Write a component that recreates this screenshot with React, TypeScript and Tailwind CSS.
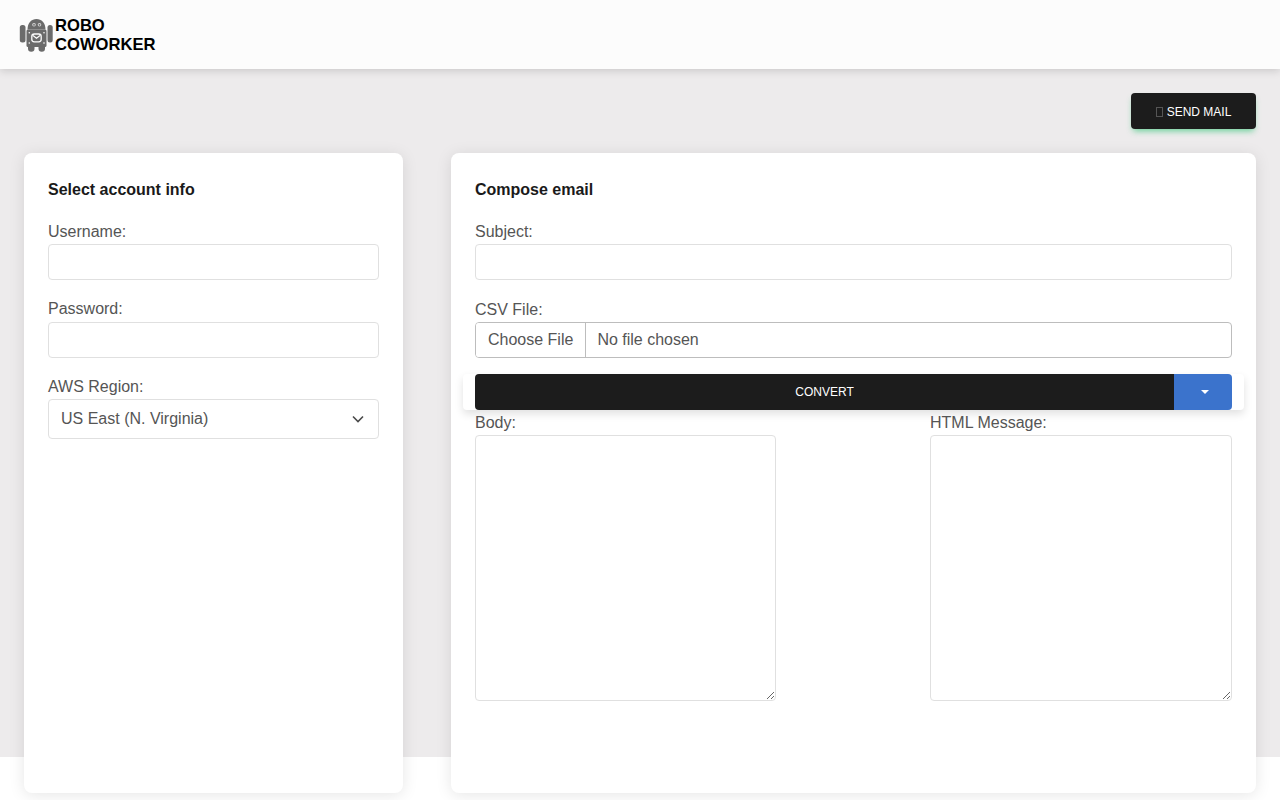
import React from 'react';

const inputClass =
  'block w-full h-9 rounded border border-[#e0e0e0] bg-white px-3 text-base text-[#555555] outline-none';

function RoboLogo() {
  return (
    <svg width="34" height="36" viewBox="0 0 34 36" className="shrink-0" fill="#6b6b6b">
      {/* head */}
      <path d="M8.500 12.500C8.500 6 12.500 2 17.500 2S26.500 6 26.500 12.500z" />
      <circle cx="15" cy="7.800" r="1.800" fill="#d8d8d8" />
      <circle cx="20.500" cy="7.800" r="1.800" fill="#d8d8d8" />
      <circle cx="15" cy="7.800" r="0.900" />
      <circle cx="20.500" cy="7.800" r="0.900" />
      {/* arms */}
      <rect x="0.800" y="8" width="5.700" height="17.500" rx="2.500" />
      <rect x="28.500" y="8" width="5.200" height="17.500" rx="2.500" />
      {/* body */}
      <rect x="7.500" y="12.500" width="20" height="17.500" rx="1.500" />
      <circle cx="10.300" cy="15.800" r="0.800" fill="#fcfcfc" />
      <circle cx="25" cy="15.800" r="0.800" fill="#fcfcfc" />
      <circle cx="10.300" cy="26" r="0.800" fill="#fcfcfc" />
      <circle cx="25" cy="26" r="0.800" fill="#fcfcfc" />
      {/* mail */}
      <rect x="12.800" y="17" width="9.400" height="7.800" rx="2.500" fill="none" stroke="#fcfcfc" strokeWidth="1.300" />
      <path d="M14 18.500L17.500 21.200l3.500-2.700" fill="none" stroke="#fcfcfc" strokeWidth="1.100" />
      {/* legs */}
      <path d="M9 29.500h6.500v2a3.250 3.250 0 0 1-6.500 0z" />
      <path d="M19.500 29.500h6.500v2a3.250 3.250 0 0 1-6.500 0z" />
    </svg>
  );
}

function Field({ label, raised, children }: { label: string; raised?: boolean; children: React.ReactNode }) {
  return (
    <div>
      <label className={raised ? 'block text-base leading-6 mb-[1px] text-[#555555]' : 'block text-base leading-6 pt-[1px] text-[#555555]'}>
        {label}
      </label>
      {children}
    </div>
  );
}

export default function App() {
  return (
    <div className="font-['Liberation_Sans',Arial,sans-serif] text-[#212529] bg-white h-[800px] overflow-hidden">
      <div className="h-[757px] bg-[#edebec]">
        <header className="h-[69px] bg-[#fcfcfc] shadow-[0_2px_8px_rgba(0,0,0,0.15)] flex items-center pl-[19px]">
          <RoboLogo />
          <div className="ml-[2px] pt-[1px] text-[16.600px] leading-[19.500px] font-bold text-black">
            ROBO
            <br />
            COWORKER
          </div>
        </header>

        <div className="flex justify-end px-6 pt-6 pb-6">
          <button
            type="button"
            className="w-[125px] h-9 pt-[2px] rounded bg-[#1c1c1c] text-white text-[12px] uppercase flex items-center justify-center gap-[4px] shadow-[0_4px_6px_-2px_rgba(70,200,130,0.8)]"
          >
            <span className="inline-block w-[7px] h-[10px] border border-[#555555]" />
            Send Mail
          </button>
        </div>

        <div className="flex gap-12 px-6 items-start">
          {/* Account card */}
          <section className="w-[379px] h-[640px] bg-white rounded-lg shadow-[0_2px_16px_rgba(0,0,0,0.1)] p-6">
            <h2 className="text-base font-bold leading-6 pt-[1px] text-[#1a1a1a] mb-[17px]">Select account info</h2>
            <div className="flex flex-col gap-[17px]">
              <Field label="Username:">
                <input className={inputClass} />
              </Field>
              <Field label="Password:" raised>
                <input type="password" className={inputClass} />
              </Field>
              <div className="-mt-[1px]">
                <Field label="AWS Region:">
                  <div className="relative">
                    <select className="block w-full h-10 appearance-none rounded border border-[#e0e0e0] bg-white px-3 text-base text-[#555555] outline-none">
                      <option>US East (N. Virginia)</option>
                    </select>
                    <svg
                      className="absolute right-[15px] top-[16px] pointer-events-none"
                      width="12"
                      height="8"
                      viewBox="0 0 12 8"
                      fill="none"
                      stroke="#4a4a4a"
                      strokeWidth="1.600"
                    >
                      <path d="M1 1.500l5 5 5-5" />
                    </svg>
                  </div>
                </Field>
              </div>
            </div>
          </section>

          {/* Compose card */}
          <section className="flex-1 h-[640px] bg-white rounded-lg shadow-[0_2px_16px_rgba(0,0,0,0.1)] p-6">
            <h2 className="text-base font-bold leading-6 pt-[1px] text-[#1a1a1a] mb-[17px]">Compose email</h2>
            <Field label="Subject:">
              <input className={inputClass} />
            </Field>
            <div className="mt-[17px]">
              <Field label="CSV File:">
                <input
                  type="file"
                  className="block w-full h-9 rounded border border-[#bdbdbd] bg-white text-base text-[#555555] file:h-full file:mr-[11px] file:px-3 file:border-0 file:border-r file:border-solid file:border-[#bdbdbd] file:bg-white file:text-base file:text-[#555555] file:font-['Liberation_Sans',Arial,sans-serif]"
                />
              </Field>
            </div>
            <div className="mt-4 -mx-3 px-3 rounded bg-white shadow-[0_4px_8px_rgba(0,0,0,0.12)]">
              <div className="flex h-9">
                <button type="button" className="flex-1 rounded-l bg-[#1c1c1c] text-white text-[12px] uppercase">
                  Convert
                </button>
                <button type="button" className="w-[58px] pl-[3px] rounded-r bg-[#3b73cc] flex items-center justify-center">
                  <span className="block w-0 h-0 border-x-[4px] border-x-transparent border-t-[4px] border-t-white" />
                </button>
              </div>
            </div>
            <div className="flex justify-between">
              <div className="w-[301px]">
                <Field label="Body:">
                  <textarea className="block w-full h-[266px] rounded border border-[#e0e0e0] bg-white outline-none" />
                </Field>
              </div>
              <div className="w-[302px]">
                <Field label="HTML Message:">
                  <textarea className="block w-full h-[266px] rounded border border-[#e0e0e0] bg-white outline-none" />
                </Field>
              </div>
            </div>
          </section>
        </div>
      </div>
    </div>
  );
}
